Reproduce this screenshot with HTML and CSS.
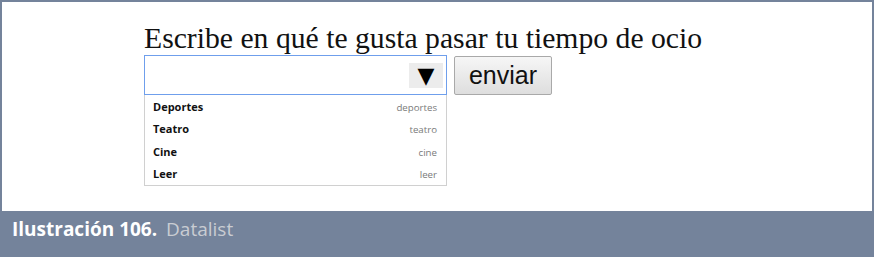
FILE: index.html
```html
<!DOCTYPE html>
<html lang="es">

<head>
    <meta charset="UTF-8">
    <meta name="viewport" content="width=device-width, initial-scale=1.0">
    <title>Datalist</title>

    <link rel="stylesheet" href="styles.css">
</head>

<body>
    <div class="figure">
        <div class="shot">
            <h1 class="question">Escribe en qué te gusta pasar tu tiempo de ocio</h1>
            <div class="formRow">
                <div class="combo">
                    <div class="comboInput">
                        <span class="arrowBox">&#9660;</span>
                    </div>
                    <ul class="options">
                        <li><b>Deportes</b><span>deportes</span></li>
                        <li><b>Teatro</b><span>teatro</span></li>
                        <li><b>Cine</b><span>cine</span></li>
                        <li><b>Leer</b><span>leer</span></li>
                    </ul>
                </div>
                <button class="send">enviar</button>
            </div>
        </div>
        <div class="caption"><strong>Ilustración 106.</strong> <span>Datalist</span></div>
    </div>
</body>

</html>
```

FILE: styles.css
```css
*{margin: 0px;padding: 0px;box-sizing: border-box;}
body{background: #ffffff;width: 874px;height: 259px;overflow: hidden;}
.figure{border: 2px solid #74839b;border-bottom: none;width: 874px;}
.shot{height: 209px;padding: 21px 0px 0px 142px;background: #ffffff;}
.question{font-family: "Liberation Serif", serif;font-weight: 400;font-size: 29.7px;line-height: 30px;color: #111111;margin-bottom: 2px;}
.formRow{display: flex;align-items: flex-start;gap: 7px;}
.combo{width: 303px;}
.comboInput{height: 40px;border: 1px solid #6f9fec;display: flex;justify-content: flex-end;align-items: center;padding-right: 3px;}
.arrowBox{width: 34px;height: 25px;background: #ececec;font-family: "DejaVu Sans", sans-serif;font-size: 22px;line-height: 25px;text-align: center;color: #000000;}
.options{list-style-type: none;border: 1px solid #d0d0d0;border-top: none;padding: 1px 0px 0px 0px;font-family: "Open Sans", sans-serif;font-size: 11px;}
.options li{display: flex;justify-content: space-between;align-items: baseline;height: 22.3px;line-height: 22px;padding: 0px 9px 0px 8px;}
.options b{font-weight: 700;color: #111111;}
.options span{color: #7a7a7a;font-size: 9.7px;}
.send{width: 98px;height: 39px;margin-top: 1px;border: 1px solid #a9a9a9;border-radius: 2px;background: linear-gradient(#f6f6f6, #dedede);font-family: "Liberation Sans", Arial, sans-serif;font-size: 25px;color: #111111;}
.caption{height: 46px;margin-left: -2px;margin-right: -2px;background: #74839b;padding: 4px 0px 0px 12px;font-family: "Open Sans", sans-serif;font-size: 19px;line-height: 28px;}
.caption strong{color: #ffffff;font-weight: 700;}
.caption span{color: #c9ccd2;margin-left: 4px;}
```
